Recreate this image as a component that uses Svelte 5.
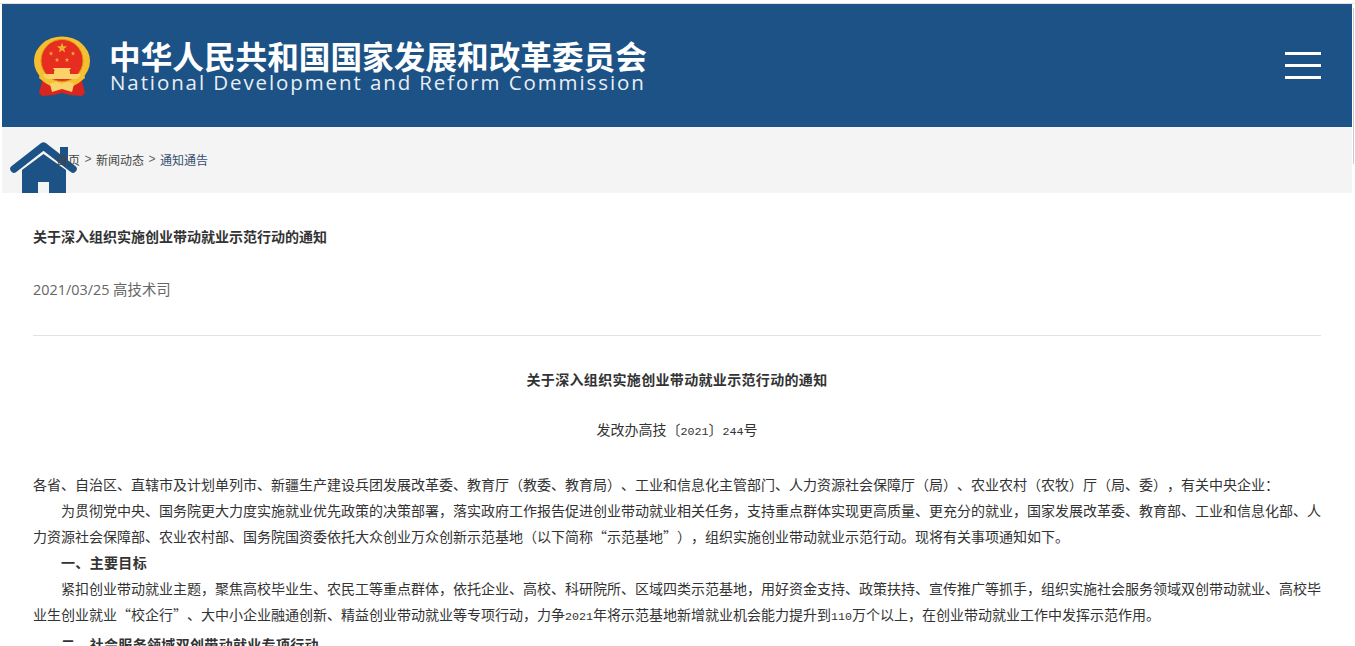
<script>
  const crumbs = ['首页', '新闻动态', '通知通告'];
  const paragraphs = [
    { text: '各省、自治区、直辖市及计划单列市、新疆生产建设兵团发展改革委、教育厅（教委、教育局）、工业和信息化主管部门、人力资源社会保障厅（局）、农业农村（农牧）厅（局、委），有关中央企业：' },
    { text: '为贯彻党中央、国务院更大力度实施就业优先政策的决策部署，落实政府工作报告促进创业带动就业相关任务，支持重点群体实现更高质量、更充分的就业，国家发展改革委、教育部、工业和信息化部、人力资源社会保障部、农业农村部、国务院国资委依托大众创业万众创新示范基地（以下简称“示范基地”），组织实施创业带动就业示范行动。现将有关事项通知如下。', indent: true },
    { text: '一、主要目标', indent: true, bold: true },
    { text: '紧扣创业带动就业主题，聚焦高校毕业生、农民工等重点群体，依托企业、高校、科研院所、区域四类示范基地，用好资金支持、政策扶持、宣传推广等抓手，组织实施社会服务领域双创带动就业、高校毕业生创业就业“校企行”、大中小企业融通创新、精益创业带动就业等专项行动，力争2021年将示范基地新增就业机会能力提升到110万个以上，在创业带动就业工作中发挥示范作用。', indent: true },
    { text: '二、社会服务领域双创带动就业专项行动', indent: true, bold: true }
  ];

  // digits are half-width in the original font
  const parts = (text) => text.split(/(\d+)/);

  function star(cx, cy, r) {
    const pts = [];
    for (let i = 0; i < 10; i++) {
      const a = -Math.PI / 2 + (i * Math.PI) / 5;
      const d = i % 2 ? r * 0.4 : r;
      pts.push((cx + d * Math.cos(a)).toFixed(1) + ',' + (cy + d * Math.sin(a)).toFixed(1));
    }
    return pts.join(' ');
  }
</script>

<div class="page">
  <span class="scroll-edge"></span>
  <div class="top-line"></div>

  <header class="banner">
    <div class="brand">
      <svg class="emblem" viewBox="1 -1 60 60" width="60" height="60">
        <path d="M11 40 L7 56 L10 59 L22 58 L30 56 L38 58 L50 59 L53 56 L49 40 Z" fill="#d8261f" />
        <ellipse cx="30" cy="24" rx="28" ry="24.5" fill="#f6bf30" />
        <circle cx="30" cy="23.5" r="21" fill="#e62d20" stroke="#d6981e" stroke-width="1" />
        <polygon points={star(30, 11, 5.5)} fill="#efb02e" />
        <polygon points={star(19, 16.5, 2.4)} fill="#efb02e" />
        <polygon points={star(41, 16.5, 2.4)} fill="#efb02e" />
        <polygon points={star(25, 23, 2.4)} fill="#efb02e" />
        <polygon points={star(35, 23, 2.4)} fill="#efb02e" />
        <path d="M21 31 H39 L37 34 H38 V37 H48 L50 42 H10 L12 37 H22 V34 H23 Z" fill="#f9d369" />
        <path d="M8 36 Q30 58 52 36 L53 41 Q30 62 7 41 Z" fill="#f6bf30" />
        <path d="M18 47 Q24 43 30 47 Q36 43 42 47 L40 55 L30 52 L20 55 Z" fill="#f9d369" />
      </svg>
      <div class="brand-text">
        <strong>中华人民共和国国家发展和改革委员会</strong>
        <span>National Development and Reform Commission</span>
      </div>
    </div>
    <div class="menu-btn"><i></i><i></i><i></i></div>
  </header>

  <nav class="crumbs">
    <svg class="home" viewBox="0 0 68 52" width="68" height="52">
      <path d="M50 6 H58 V24 L50 18 Z" fill="#1c5285" />
      <path d="M4 28 L33.5 5 L63 28" fill="none" stroke="#1c5285" stroke-width="7.5" stroke-linecap="round" stroke-linejoin="round" />
      <path d="M12 29 L33.5 13 L56 29 V52 H39 V41 H28 V52 H12 Z" fill="#1c5285" />
    </svg>
    {#each crumbs as crumb, i}
      {#if i > 0}<span class="sep">&gt;</span>{/if}
      <a href="#top" class:last={i === crumbs.length - 1}>{crumb}</a>
    {/each}
  </nav>

  <main class="article">
    <h1>关于深入组织实施创业带动就业示范行动的通知</h1>
    <p class="meta">2021/03/25 高技术司</p>
    <hr />
    <h2>关于深入组织实施创业带动就业示范行动的通知</h2>
    <p class="docno">发改办高技〔<span class="num">2021</span>〕<span class="num">244</span>号</p>
    <div class="body">
      {#each paragraphs as p}
        <p class:indent={p.indent} class:bold={p.bold}>
          {#each parts(p.text) as part, i}{#if i % 2}<span class="num">{part}</span>{:else}{part}{/if}{/each}
        </p>
      {/each}
    </div>
  </main>
</div>

<style>
  :global(body) {
    margin: 0;
    background: #fff;
  }

  .page {
    position: relative;
    height: 646px;
    overflow: hidden;
    box-sizing: border-box;
    padding: 3px 3px 0 2px;
    font-family: "Noto Sans CJK SC", "Liberation Sans", sans-serif;
    color: #333;
    text-spacing-trim: space-all;
  }

  .top-line {
    height: 1px;
    margin: 0 -3px 0 -2px;
    background: #e3e3e3;
  }

  .scroll-edge {
    position: absolute;
    left: 1353px;
    top: 8px;
    width: 1px;
    height: 156px;
    background: #c9c9d2;
  }

  .banner {
    height: 123px;
    background: #1c5285;
    display: flex;
    align-items: center;
    justify-content: space-between;
    padding: 0 31px;
  }

  .brand {
    display: flex;
    align-items: flex-start;
    gap: 16px;
    margin-top: 1px;
  }

  .emblem {
    flex: none;
  }

  .brand-text {
    display: flex;
    flex-direction: column;
    padding-top: 3px;
    color: #fff;
    white-space: nowrap;
  }

  .brand-text strong {
    font-size: 31.65px;
    line-height: 32px;
    font-weight: 700;
  }

  .brand-text span {
    margin-left: 1px;
    font-family: "Open Sans", "Liberation Sans", sans-serif;
    font-size: 20.5px;
    line-height: 22px;
    letter-spacing: 1.9px;
    color: #e8eef4;
  }

  .menu-btn {
    display: flex;
    flex-direction: column;
    gap: 9px;
  }

  .menu-btn i {
    display: block;
    width: 36px;
    height: 3px;
    background: #fff;
  }

  .crumbs {
    position: relative;
    height: 66px;
    box-sizing: border-box;
    padding: 0 0 2px 54px;
    background: #f4f4f4;
    display: flex;
    align-items: center;
    gap: 4.5px;
    font-size: 12px;
    overflow: hidden;
  }

  .crumbs a {
    position: relative;
    color: #444;
    text-decoration: none;
  }

  .crumbs a.last {
    color: #35506e;
  }

  .sep {
    font-family: "Liberation Sans", sans-serif;
    color: #666;
  }

  .home {
    position: absolute;
    left: 8px;
    top: 14px;
  }

  .article {
    padding: 0 31px;
  }

  h1 {
    margin: 33px 0 0;
    font-size: 14px;
    line-height: 20px;
    font-weight: 700;
    color: #333;
  }

  .meta {
    margin: 34px 0 0;
    font-family: "Open Sans", "Noto Sans CJK SC", sans-serif;
    font-size: 14.4px;
    line-height: 20px;
    color: #666;
  }

  hr {
    margin: 35px 0 0;
    border: 0;
    border-top: 1px solid #e2e2e2;
  }

  h2 {
    margin: 33px 0 0;
    text-align: center;
    font-size: 14px;
    line-height: 20px;
    font-weight: 700;
    letter-spacing: 0.33px;
    color: #333;
  }

  .docno {
    margin: 30px 0 0;
    text-align: center;
    font-size: 14px;
    line-height: 20px;
  }

  .num {
    font-family: "Liberation Mono", monospace;
    font-size: 11.67px;
  }

  .body {
    margin-top: 28.5px;
    font-size: 14px;
    line-height: 26.17px;
  }

  .body p {
    margin: 0;
    text-align: justify;
  }

  .body p.indent {
    text-indent: 28px;
  }

  .body p.bold {
    font-weight: 700;
    letter-spacing: 0.33px;
  }
</style>
